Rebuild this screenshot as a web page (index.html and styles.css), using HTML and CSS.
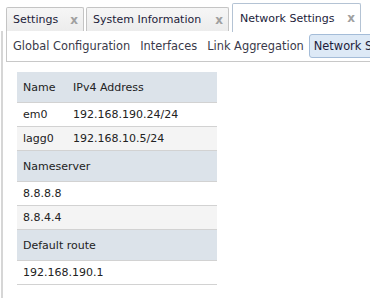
FILE: index.html
```html
<!DOCTYPE html>
<html>
<head>
<meta charset="utf-8">
<link rel="stylesheet" href="styles.css">
</head>
<body>
<div class="page">
  <div class="tabbar">
    <div class="tab tab-settings"><span>Settings</span><span class="close">x</span></div>
    <div class="tab tab-sysinfo"><span>System Information</span><span class="close">x</span></div>
    <div class="tab tab-net active"><span>Network Settings</span><span class="close">x</span></div>
  </div>
  <div class="main">
    <div class="subnav">
      <span class="item">Global Configuration</span>
      <span class="item">Interfaces</span>
      <span class="item">Link Aggregation</span>
      <span class="item current">Network Settings</span>
    </div>
    <table class="info">
      <tr class="head"><td class="c1">Name</td><td>IPv4 Address</td></tr>
      <tr><td class="c1">em0</td><td>192.168.190.24/24</td></tr>
      <tr class="alt"><td class="c1">lagg0</td><td>192.168.10.5/24</td></tr>
      <tr class="head"><td colspan="2">Nameserver</td></tr>
      <tr><td colspan="2">8.8.8.8</td></tr>
      <tr class="alt"><td colspan="2">8.8.4.4</td></tr>
      <tr class="head"><td colspan="2">Default route</td></tr>
      <tr><td colspan="2">192.168.190.1</td></tr>
    </table>
  </div>
</div>
</body>
</html>
```

FILE: styles.css
```css
html, body {
  margin: 0;
  padding: 0;
  background: #ffffff;
}
body {
  width: 370px;
  height: 298px;
  overflow: hidden;
  font-family: "DejaVu Sans", Verdana, sans-serif;
  font-size: 11px;
  color: #222;
}
.page {
  display: flex;
  flex-direction: column;
  height: 298px;
}
.tabbar {
  display: flex;
  align-items: flex-end;
  height: 31px;
  padding-left: 6px;
  box-sizing: border-box;
}
.tab {
  box-sizing: border-box;
  height: 24px;
  display: flex;
  align-items: center;
  justify-content: space-between;
  padding: 0 5px 0 6px;
  border: 1px solid #c4c4c4;
  border-bottom: none;
  border-radius: 2px 2px 0 0;
  background: linear-gradient(#f6f6f6, #ececec);
  color: #1c1c3a;
  white-space: nowrap;
}
.tab-settings { width: 78px; margin-right: 2px; }
.tab-sysinfo { width: 143px; margin-right: 3px; }
.tab-net { width: 129px; }
.tab.active {
  height: 29px;
  background: #ffffff;
  border-color: #b4c3d4;
  padding-left: 7px;
  position: relative;
  top: 1px;
}
.close {
  color: #a0a0a0;
  font-weight: bold;
  font-size: 12px;
}
.main {
  flex: 1;
  margin-left: 1px;
  border-left: 2px solid #d6d6d6;
}
.subnav {
  margin-left: 3px;
  height: 30px;
  border-left: 1px solid #c8c8c8;
  border-bottom: 1px solid #c8c8c8;
  display: flex;
  align-items: center;
  padding-left: 1px;
  white-space: nowrap;
  overflow: hidden;
  color: #3a3a4a;
  font-size: 11.4px;
}
.item {
  padding: 4px 4px;
  border: 1px solid transparent;
  border-radius: 3px;
}
.item.current {
  background: #dde9f6;
  border-color: #a4bcd8;
  color: #1c1c3a;
}
.info {
  margin: 10px 0 0 14px;
  width: 200px;
  border-collapse: collapse;
}
.info td {
  padding: 0 0 0 6px;
  height: 23px;
  border-bottom: 1px solid #d2d2d2;
  white-space: nowrap;
}
.info .c1 { width: 44px; }
.info tr.head td {
  background: #dce3ea;
  height: 30px;
}
.info tr.alt td {
  background: #f4f4f4;
}
```
